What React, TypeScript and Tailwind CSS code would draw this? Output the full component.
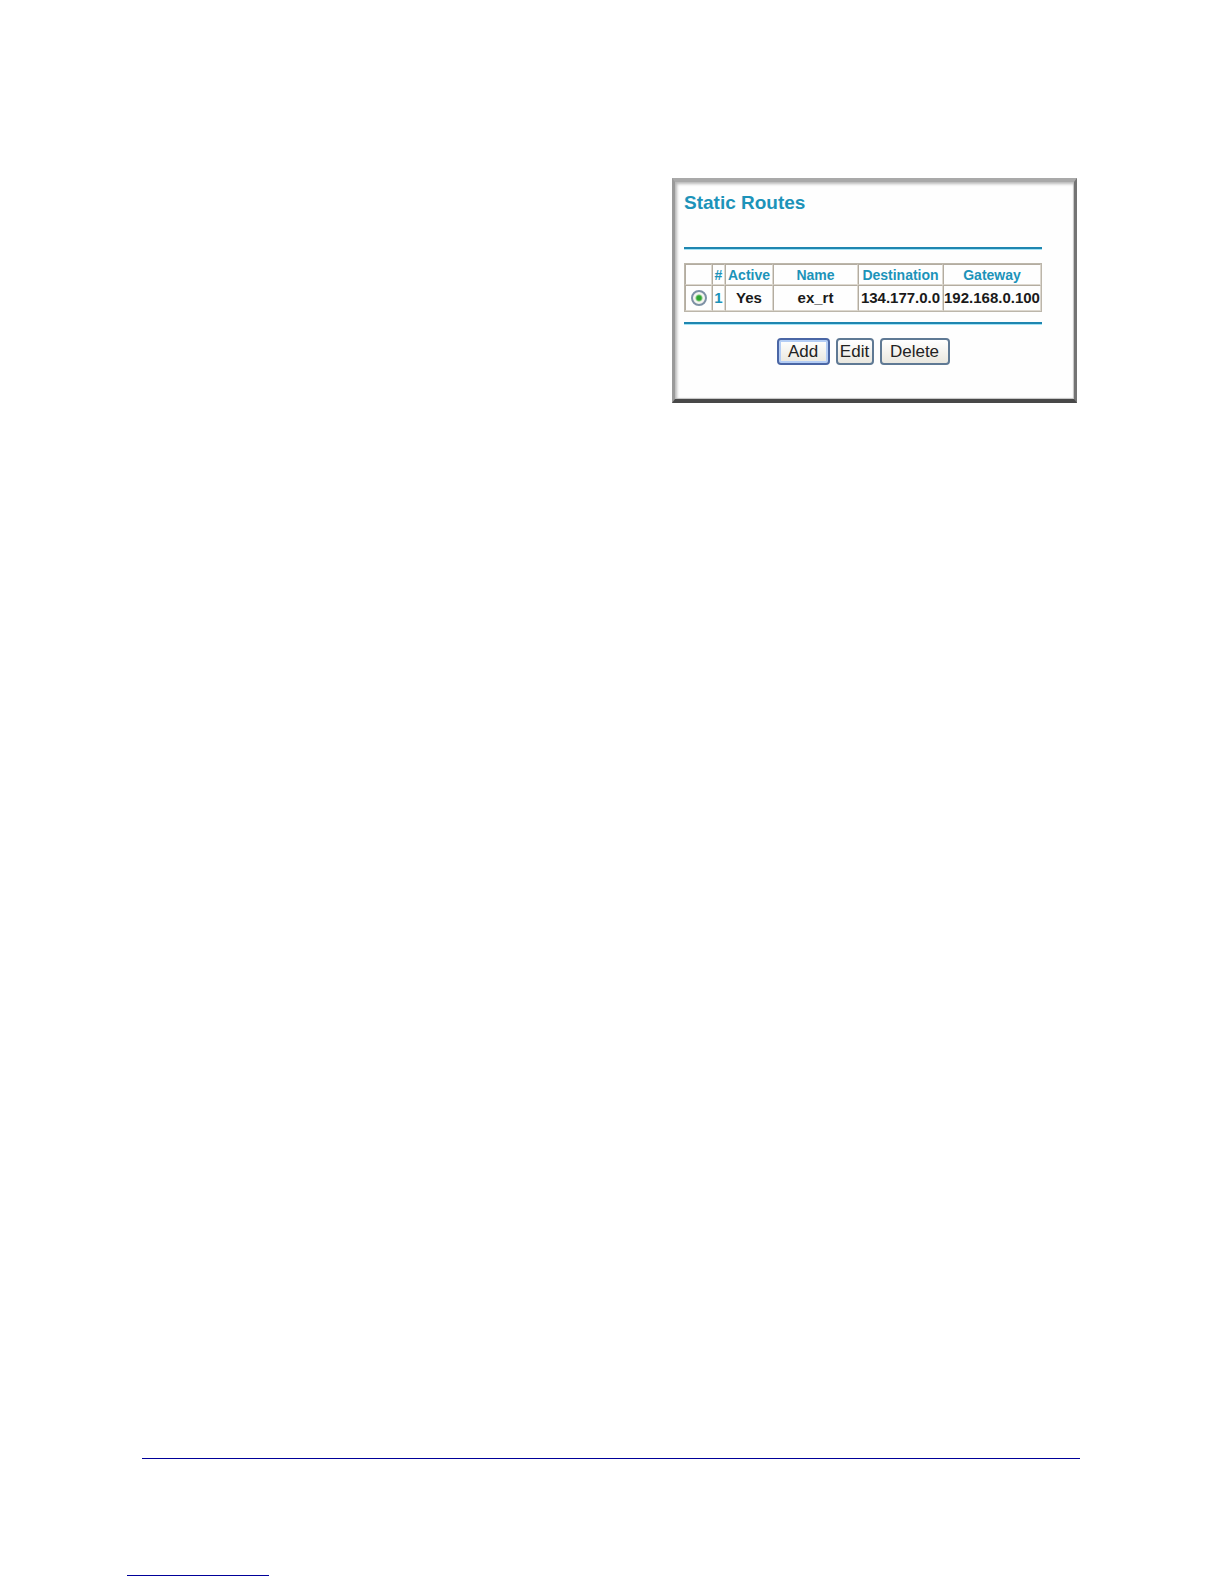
import { useState } from "react";

interface Route {
  id: number;
  active: boolean;
  name: string;
  destination: string;
  gateway: string;
}

const routes: Route[] = [
  { id: 1, active: true, name: "ex_rt", destination: "134.177.0.0", gateway: "192.168.0.100" },
];

const cell = "border border-t-[#b3aca0] border-l-[#b3aca0] border-r-[#ddd8cf] border-b-[#ddd8cf] p-0 text-center";
const button = "h-[27px] rounded-[4px] border-2 bg-linear-to-b from-white to-[#e9e7df] text-[17px] leading-none text-[#222]";
const rule = "border-t-2 border-[#1f86b0] shadow-[0_1px_0_#a5e3f5]";

function RoutesTable() {
  const [selected, setSelected] = useState(1);

  return (
    <table className="w-full table-fixed border-separate border-spacing-0 border border-[#bcb6aa] font-bold">
      <colgroup>
        <col className="w-[27px]" />
        <col className="w-[13px]" />
        <col className="w-[48px]" />
        <col className="w-[85px]" />
        <col className="w-[85px]" />
        <col />
      </colgroup>
      <thead>
        <tr className="h-[21px] text-[14px] leading-[18px] text-[#1c93b9]">
          <td className={cell}></td>
          <th className={cell}>#</th>
          <th className={cell}>Active</th>
          <th className={cell}>Name</th>
          <th className={cell}>Destination</th>
          <th className={cell}>Gateway</th>
        </tr>
      </thead>
      <tbody>
        {routes.map((route) => (
          <tr key={route.id} className="h-[26px] text-[15px] leading-[18px] text-[#1a1a1a]">
            <td className={cell}>
              <input
                type="radio"
                name="route"
                aria-label={route.name}
                checked={selected === route.id}
                onChange={() => setSelected(route.id)}
                className="mx-auto block size-4 appearance-none rounded-full border-2 border-[#7d91a5] bg-[#f4f4f0] checked:bg-[radial-gradient(circle,#2fa52f_2px,#7cc77c_3px,#f4f4f0_4px)]"
              />
            </td>
            <td className={`${cell} text-[#1c93b9]`}>{route.id}</td>
            <td className={cell}>{route.active ? "Yes" : "No"}</td>
            <td className={cell}>{route.name}</td>
            <td className={cell}>{route.destination}</td>
            <td className={cell}>{route.gateway}</td>
          </tr>
        ))}
      </tbody>
    </table>
  );
}

export default function App() {
  return (
    <div className="flex min-h-screen flex-col bg-white pt-[178px] pb-2 font-['Liberation_Sans',Arial,sans-serif]">
      <main className="flex grow justify-end pr-[147px]">
        <section className="w-full max-w-[405px] self-start border-t-4 border-r-3 border-b-4 border-l-3 border-t-[#a9a9a9] border-r-[#747474] border-b-[#484848] border-l-[#9a9a9a] bg-[#fefefe] pt-[9px] pr-8 pb-[34px] pl-[9px] shadow-[inset_2px_2px_3px_#b8b8b8,inset_-1px_-1px_1px_#c4c4c4]">
          <h1 className="text-[19px] leading-6 font-bold text-[#1c93b9]">Static Routes</h1>
          <hr className={`${rule} mt-8 mb-[14px]`} />
          <RoutesTable />
          <hr className={`${rule} mt-[10px] mb-[14px]`} />
          <div className="flex justify-center gap-[6px]">
            <button type="button" className={`${button} w-[53px] border-[#4a66a5] shadow-[inset_0_0_0_2px_#b4cdf5]`}>
              Add
            </button>
            <button type="button" className={`${button} w-[38px] border-[#5f7994]`}>
              Edit
            </button>
            <button type="button" className={`${button} w-[70px] border-[#5f7994]`}>
              Delete
            </button>
          </div>
        </section>
      </main>
      <footer>
        <hr className="mr-[144px] ml-[142px] border-t border-[#000099]" />
        <hr className="mt-[116px] ml-[127px] w-[142px] border-t border-[#000099]" />
      </footer>
    </div>
  );
}
